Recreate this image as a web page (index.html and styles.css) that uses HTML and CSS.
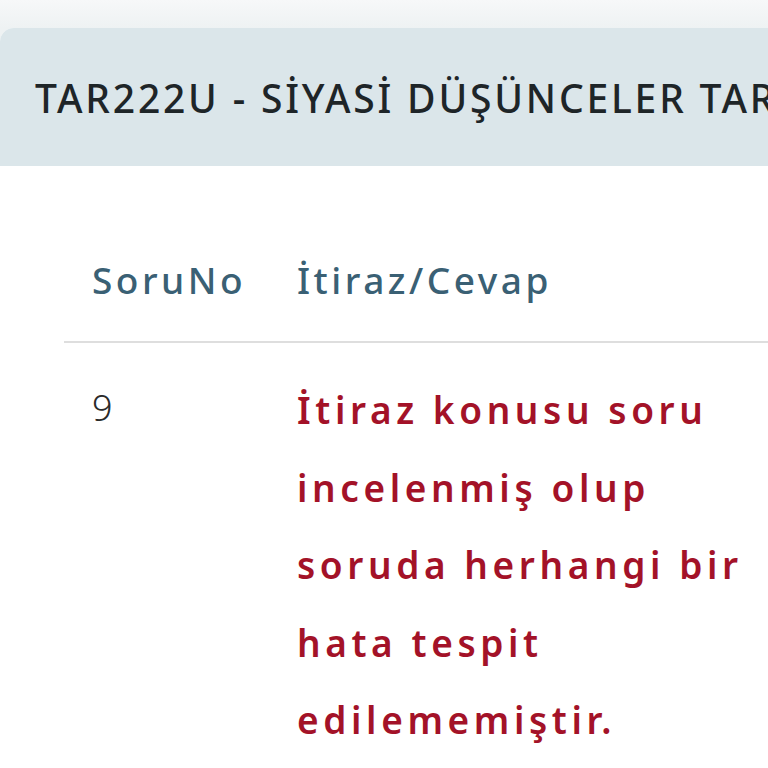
FILE: index.html
```html
<!DOCTYPE html>
<html lang="tr">
<head>
<meta charset="utf-8">
<link rel="stylesheet" href="styles.css">
</head>
<body>
<div class="page">
  <div class="card">
    <div class="card-header">TAR222U - SİYASİ DÜŞÜNCELER TARİHİ</div>
    <div class="card-body">
      <div class="table">
        <div class="th col-no">SoruNo</div>
        <div class="th col-ans">İtiraz/Cevap</div>
        <div class="td col-no num">9</div>
        <div class="td col-ans answer">İtiraz konusu soru incelenmiş olup soruda herhangi bir hata tespit edilememiştir.</div>
      </div>
    </div>
  </div>
</div>
</body>
</html>
```

FILE: styles.css
```css
html, body {
  margin: 0;
  padding: 0;
}
body {
  background: linear-gradient(#f7f8f9, #eef2f3 28px, #eef2f3);
  font-family: "Noto Sans", "DejaVu Sans", sans-serif;
  overflow: hidden;
  height: 768px;
}
.page {
  padding-top: 28px;
}
.card {
  background: #ffffff;
  border-top-left-radius: 14px;
  overflow: hidden;
  height: 740px;
}
.card-header {
  background: #dbe6ea;
  height: 138px;
  display: flex;
  align-items: center;
  padding-left: 35px;
  white-space: nowrap;
  font-size: 39px;
  font-weight: 500;
  color: #1e2528;
  letter-spacing: 2.8px;
}
.card-body {
  padding-left: 64px;
}
.table {
  display: grid;
  grid-template-columns: 233px 1fr;
}
.th {
  height: 177px;
  box-sizing: border-box;
  display: flex;
  align-items: flex-end;
  padding-bottom: 39px;
  font-size: 37px;
  line-height: 1.2;
  font-weight: 500;
  color: #3a6074;
  letter-spacing: 3.5px;
  border-bottom: 2px solid #dedede;
}
.col-no {
  padding-left: 28px;
}
.td {
  padding-top: 28px;
}
.num {
  font-size: 36px;
  font-weight: 300;
  color: #2a2a2a;
  line-height: 1.5;
  padding-top: 38px;
}
.answer {
  font-size: 37px;
  line-height: 77.5px;
  font-weight: 600;
  color: #a31228;
  letter-spacing: 4.6px;
  width: 470px;
}
```
